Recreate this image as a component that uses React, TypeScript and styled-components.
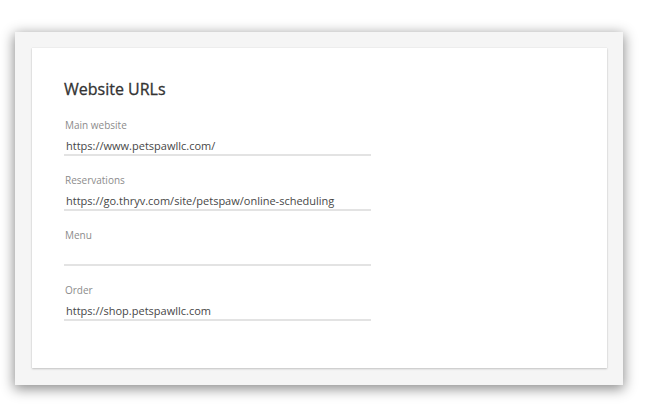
import styled, { createGlobalStyle } from "styled-components";

const GlobalStyle = createGlobalStyle`
  html, body {
    margin: 0;
    padding: 0;
    background: #ffffff;
    font-family: "Open Sans", "Liberation Sans", sans-serif;
  }
`;

const Page = styled.div`
  width: 650px;
  height: 415px;
  padding: 32px 0 0 15px;
  box-sizing: border-box;
`;

const Frame = styled.div`
  width: 608px;
  box-sizing: border-box;
  padding: 16px 16px 17px 17px;
  background: #f5f5f5;
  box-shadow: 0 3px 12px 1px rgba(0, 0, 0, 0.45);
`;

const Card = styled.section`
  display: flex;
  flex-direction: column;
  box-sizing: border-box;
  height: 320px;
  padding: 30px 32px 0 32px;
  background: #ffffff;
  box-shadow: 0 1px 2px rgba(0, 0, 0, 0.2), 0 0 1px rgba(0, 0, 0, 0.12);
`;

const Title = styled.h2`
  margin: 0 0 18px 0;
  font-size: 16px;
  line-height: 22px;
  font-weight: 400;
  color: #333333;
  -webkit-text-stroke: 0.3px #333333;
`;

const FieldList = styled.div`
  display: flex;
  flex-direction: column;
  gap: 17px;
`;

const Field = styled.label`
  display: flex;
  flex-direction: column;
  width: 307px;
`;

const Label = styled.span`
  margin: 0 0 5px 1px;
  font-size: 10px;
  line-height: 14px;
  color: #8c8c8c;
`;

const Value = styled.div`
  height: 17px;
  padding-left: 2px;
  font-size: 11px;
  line-height: 17px;
  color: #474747;
  border-bottom: 2px solid #e3e3e3;
  white-space: nowrap;
`;

const urls = [
  { label: "Main website", value: "https://www.petspawllc.com/" },
  { label: "Reservations", value: "https://go.thryv.com/site/petspaw/online-scheduling" },
  { label: "Menu", value: "" },
  { label: "Order", value: "https://shop.petspawllc.com" },
];

export default function App() {
  return (
    <>
      <GlobalStyle />
      <Page>
        <Frame>
          <Card>
            <Title>Website URLs</Title>
            <FieldList>
              {urls.map(({ label, value }) => (
                <Field key={label}>
                  <Label>{label}</Label>
                  <Value>{value}</Value>
                </Field>
              ))}
            </FieldList>
          </Card>
        </Frame>
      </Page>
    </>
  );
}
